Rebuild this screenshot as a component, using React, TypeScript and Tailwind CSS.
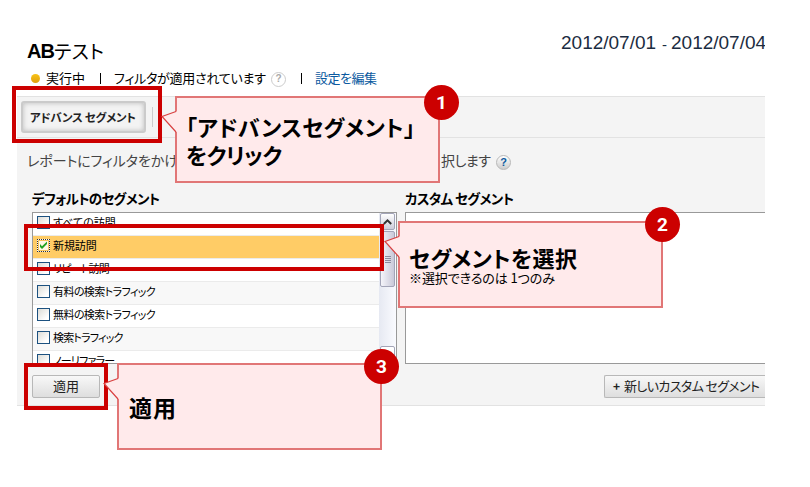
import type { ReactNode } from "react";
import clsx from "clsx";

const segments = [
  { name: "すべての訪問", width: "w-[62px]" },
  { name: "新規訪問", width: "w-[43px]", checked: true },
  { name: "リピート訪問", width: "w-[56px]" },
  { name: "有料の検索トラフィック", width: "w-[102px]" },
  { name: "無料の検索トラフィック", width: "w-[102px]" },
  { name: "検索トラフィック", width: "w-[69px]" },
  { name: "ノーリファラー", width: "w-[61px]" },
];

// Japanese label spread evenly over a fixed width
function Label({ className, children }: { className: string; children: ReactNode }) {
  return (
    <span
      className={clsx(
        "block shrink-0 whitespace-nowrap [text-align-last:justify] [font-feature-settings:'palt']",
        className
      )}
    >
      {children}
    </span>
  );
}

function Checkbox({ checked }: { checked?: boolean }) {
  return (
    <span
      className={clsx(
        "block h-[13px] w-[13px] shrink-0 border bg-linear-to-br from-[#dcdcd7] to-white to-80%",
        checked ? "border-dotted border-[#333]" : "border-[#1c5180]"
      )}
    >
      {checked && (
        <svg className="block" width="11" height="11" viewBox="0 0 11 11">
          <rect x="0.5" y="0.5" width="10" height="10" fill="#fff8e4" stroke="#f9c55e" />
          <path d="M2 4v3l2 2 5-5V1.5L4 6.3z" fill="#21a121" />
        </svg>
      )}
    </span>
  );
}

function Callout({ className, tail, children }: { className: string; tail: string; children: ReactNode }) {
  return (
    <div className={clsx("absolute border-2 border-[#e17676] bg-[#ffeaeb]", className)}>
      <svg className={clsx("absolute -left-[16px]", tail)} width="18" height="24" viewBox="0 0 18 24">
        <path d="M15 1.5L1 6.5L15 22L18 22V1.5z" fill="#ffeaeb" />
        <path d="M15 1.5L1 6.5L15 22" fill="none" stroke="#d94040" strokeWidth="1.2" />
      </svg>
      {children}
    </div>
  );
}

function Badge({ className, children }: { className: string; children: ReactNode }) {
  return (
    <div
      className={clsx(
        "absolute flex h-[35px] w-[35px] items-center justify-center rounded-full bg-[#cc0000] font-['Roboto',sans-serif] text-[19px] leading-none font-bold text-white",
        className
      )}
    >
      {children}
    </div>
  );
}

export default function App() {
  return (
    <div className="relative h-[487px] w-[810px] overflow-hidden bg-white font-['Noto_Sans_CJK_JP',sans-serif] text-black">
      <div className="w-[765px] overflow-hidden">
        {/* Header */}
        <header className="flex h-[96px] justify-between pl-[27px]">
          <div className="pt-[39px]">
            <h1 className="flex h-6 items-center">
              <span className="w-[27px] font-['Liberation_Sans',sans-serif] text-[20px] font-bold tracking-[-1px]">AB</span>
              <Label className="w-[48px] text-[19px] leading-6 tracking-[-2px]">テスト</Label>
            </h1>
            <div className="mt-[5px] flex h-5 items-center text-[13px] leading-5">
              <span className="ml-[4px] h-[9px] w-[9px] rounded-full bg-linear-to-b from-[#f8c316] to-[#e0a010]" />
              <Label className="ml-[6px] w-[39px]">実行中</Label>
              <span className="ml-[15px] h-[11px] w-px bg-black" />
              <Label className="mr-[2px] ml-[13px] w-[151px] tracking-[-1px]">フィルタが適用されています</Label>
              <span className="mt-[2px] ml-[4px] flex h-[15px] w-[15px] items-center justify-center rounded-full border border-[#ccc] font-['Liberation_Sans',sans-serif] text-[10px] leading-none font-bold text-[#aaa]">?</span>
              <span className="ml-[15px] h-[11px] w-px bg-black" />
              <Label className="ml-[13px] w-[61px] tracking-[-1px] text-[#0b5aa0]">設定を編集</Label>
            </div>
          </div>
          <div className="mt-[31px] -mr-[3px] flex h-6 w-[207px] shrink-0 items-center font-['Liberation_Sans',sans-serif] text-[19px] whitespace-nowrap text-[#1b2c41]">
            <span className="w-[101px]">2012/07/01</span>
            <span className="w-[9px] pt-[2px] text-[15px] leading-none">-</span>
            <span>2012/07/04</span>
          </div>
        </header>

        {/* Segment panel */}
        <section className="ml-[17px] flex h-[310px] flex-col border-y border-[#e2e2e2] bg-[#f4f4f4]">
          <div className="flex h-[41px] shrink-0 items-center border-b border-[#e2e2e2] pl-1">
            <button className="flex h-[32px] w-[125px] items-center justify-center rounded-[3px] border-2 border-[#cbcbcb] bg-[#f3f3f3] pb-px shadow-[inset_0_0_5px_#bbb]">
              <Label className="mr-[2px] w-[105px] text-[11.5px] leading-4 font-bold tracking-[-1px] text-[#222]">アドバンス セグメント</Label>
            </button>
            <span className="ml-[6px] h-5 w-px bg-[#ccc]" />
          </div>

          <div className="flex h-[48px] shrink-0 items-center justify-between pr-[254px] pl-[10px] text-[14px] text-[#444]">
            <Label className="w-[150px] pb-[3px] tracking-[-1px]">レポートにフィルタをかけ</Label>
            <div className="flex items-center">
              <Label className="mr-px w-[49px] pb-[3px] tracking-[-1px]">択します</Label>
              <span className="ml-[5px] flex h-[15px] w-[15px] items-center justify-center rounded-full border border-[#b8b8b8] bg-linear-to-b from-white to-[#ccc] font-['Liberation_Sans',sans-serif] text-[11px] leading-none font-bold text-[#0b5aa0]">?</span>
            </div>
          </div>

          <div className="flex shrink-0 gap-[8px] pl-[15px]">
            <div className="w-[365px]">
              <h2 className="flex h-[26px] items-center pb-[2px]">
                <Label className="w-[127px] text-[13.5px] leading-5 font-bold tracking-[-1px]">デフォルトのセグメント</Label>
              </h2>
              <div className="flex h-[152px] overflow-hidden border border-[#999] bg-white">
                <ul className="w-[346px]">
                  {segments.map((s, i) => (
                    <li
                      key={s.name}
                      className={clsx(
                        "flex h-[23px] items-start border-b border-[#ebebeb] pt-[3px] pl-1",
                        s.checked ? "bg-[#ffcc66]" : i % 2 ? "bg-[#f8f8f8]" : "bg-white"
                      )}
                    >
                      <Checkbox checked={s.checked} />
                      <Label className={clsx("ml-[3px] text-[11px] leading-[12px] tracking-[-0.8px]", s.width)}>{s.name}</Label>
                    </li>
                  ))}
                </ul>
                <div className="flex w-[17px] flex-col bg-linear-to-r from-[#e6e9f2] to-[#fafbff] px-px">
                  <div className="flex h-[17px] shrink-0 items-center justify-center rounded-[2px] border border-[#a3a5b8] bg-linear-to-b from-white to-[#ccccda]">
                    <svg width="9" height="6" viewBox="0 0 9 6">
                      <path d="M0.8 5L4.5 1.4L8.2 5" fill="none" stroke="#333" strokeWidth="2" />
                    </svg>
                  </div>
                  <div className="mt-px flex h-[56px] shrink-0 flex-col items-center justify-center gap-px rounded-[2px] border border-[#a3a5b8] bg-linear-to-r from-[#f5f5fa] to-[#c9c9d9]">
                    <span className="h-px w-[6px] bg-[#8b8b9d]" />
                    <span className="h-px w-[6px] bg-[#8b8b9d]" />
                    <span className="h-px w-[6px] bg-[#8b8b9d]" />
                    <span className="h-px w-[6px] bg-[#8b8b9d]" />
                  </div>
                  <div className="mt-auto h-[17px] shrink-0 rounded-[2px] border border-[#a3a5b8] bg-white" />
                </div>
              </div>
            </div>
            <div className="grow">
              <h2 className="flex h-[26px] items-center pb-[2px]">
                <Label className="w-[108px] text-[13.5px] leading-5 font-bold tracking-[-1px]">カスタム セグメント</Label>
              </h2>
              <div className="h-[152px] border border-r-0 border-[#999] bg-white" />
            </div>
          </div>

          <div className="mt-[11px] flex justify-between pl-[15px] text-[13px] text-[#222]">
            <button className="flex h-[23px] w-[68px] items-center justify-center rounded-[2px] border border-[#b8b8b8] bg-linear-to-b from-[#f8f8f8] to-[#dedede] pb-px">
              <Label className="w-[26px]">適用</Label>
            </button>
            <button className="flex h-[23px] w-[161px] items-center rounded-l-[2px] border border-r-0 border-[#b8b8b8] bg-linear-to-b from-[#f8f8f8] to-[#dedede] pb-px pl-[8px]">
              <span className="w-[11px] text-left text-[12px] leading-5 font-bold">+</span>
              <Label className="w-[135px] tracking-[-1px]">新しいカスタム セグメント</Label>
            </button>
          </div>
        </section>
      </div>

      {/* Highlight frames */}
      <div className="absolute top-[86px] left-[12px] h-[57px] w-[150px] border-4 border-[#cc0000]" />
      <div className="absolute top-[224px] left-[24px] h-[47px] w-[360px] border-4 border-[#cc0000]" />
      <div className="absolute top-[363px] left-[24px] h-[47px] w-[84px] border-4 border-[#cc0000]" />

      {/* Step callouts */}
      <Callout className="top-[96px] left-[175px] h-[87px] w-[265px] pt-[14px] pl-[9px]" tail="top-[12px]">
        <Label className="w-[227px] text-[22px] leading-[28px] font-bold tracking-[-2px]">「アドバンスセグメント」</Label>
        <Label className="w-[94px] text-[22px] leading-[28px] font-bold tracking-[-2px]">をクリック</Label>
      </Callout>
      <Callout className="top-[221px] left-[398px] h-[87px] w-[265px] pt-[20px] pl-[9px]" tail="top-[12px]">
        <Label className="w-[166px] text-[22px] leading-[28px] font-bold tracking-[-2px]">セグメントを選択</Label>
        <Label className="w-[145px] text-[13px] leading-[14px] tracking-[-1px]">※選択できるのは 1つのみ</Label>
      </Callout>
      <Callout className="top-[363px] left-[117px] h-[87px] w-[265px] pt-[28px] pl-[10px]" tail="top-[12px]">
        <Label className="w-[47px] text-[23px] leading-[28px] font-bold">適用</Label>
      </Callout>

      <Badge className="top-[85px] left-[424px]">1</Badge>
      <Badge className="top-[207px] left-[645px]">2</Badge>
      <Badge className="top-[349px] left-[364px]">3</Badge>
    </div>
  );
}
